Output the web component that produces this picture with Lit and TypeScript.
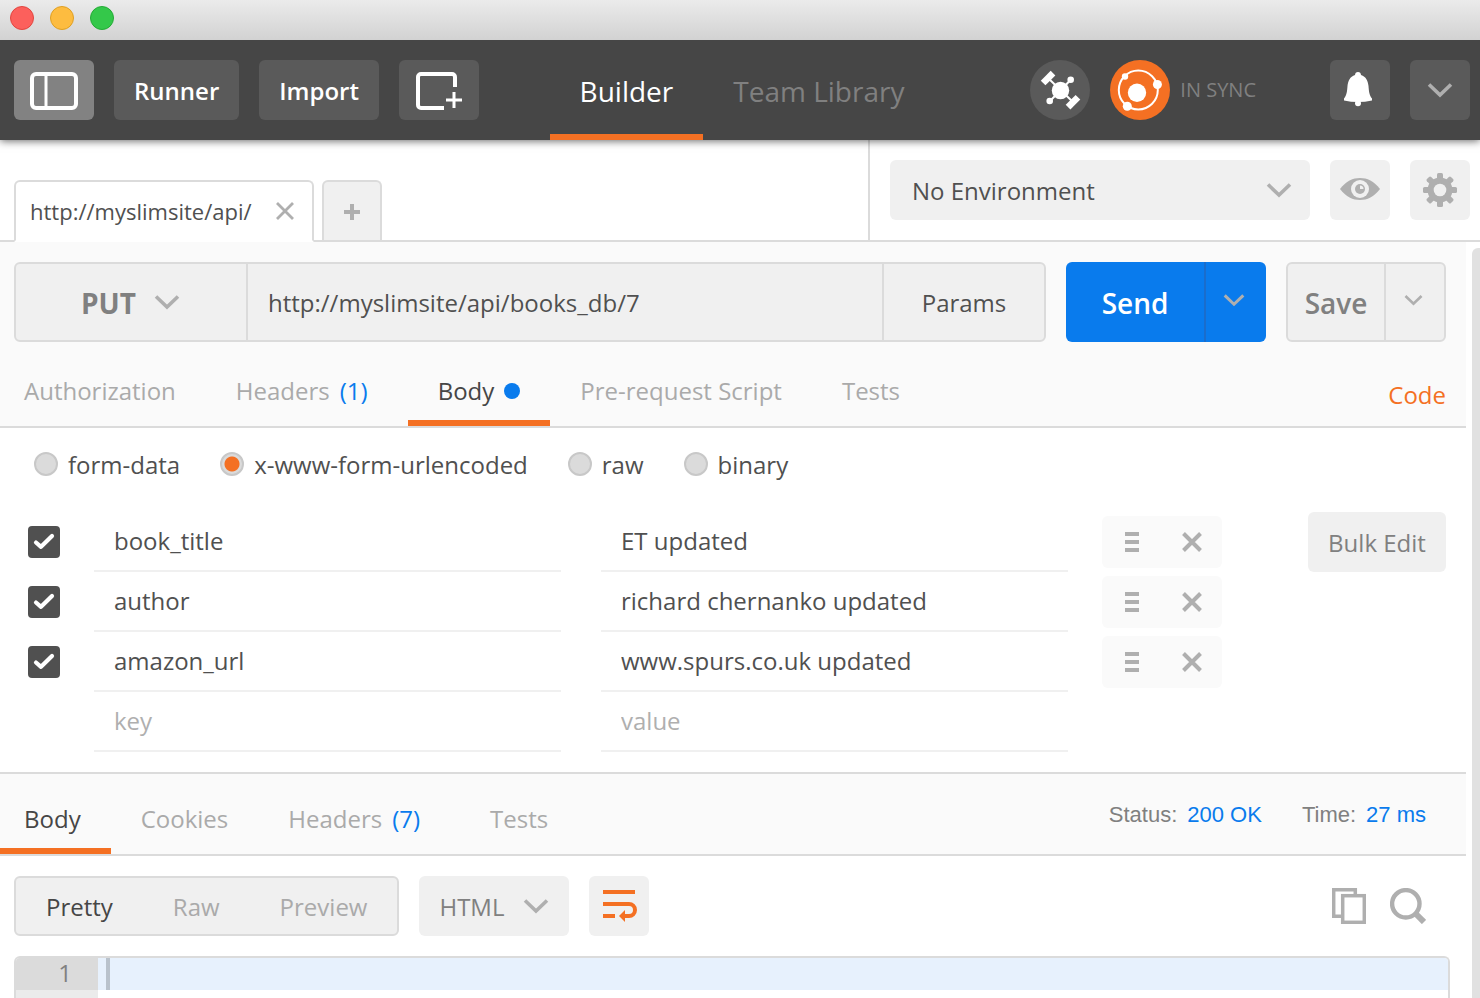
import { LitElement, html, css, svg, nothing } from "lit";
import { customElement, state } from "lit/decorators.js";
import { classMap } from "lit/directives/class-map.js";

interface Tab {
  label: string;
  count?: number;
  dot?: boolean;
}

interface Param {
  key: string;
  value: string;
}

const chevron = (w = 26, h = 16) => html`<svg class="chevron" width=${w} height=${h} viewBox="0 0 26 16" aria-hidden="true">
  <path d="M2 2.500L13 13L24 2.500" fill="none" stroke="currentColor" stroke-width="3.600"/>
</svg>`;

const gearTeeth = [0, 45, 90, 135].map(
  (a) => svg`<rect x="17" y="3" width="6" height="34" rx="1.500" transform="rotate(${a} 20 20)"/>`
);

@customElement("app-root")
export class AppRoot extends LitElement {
  @state() requestTab = "Body";
  @state() responseTab = "Body";
  @state() view = "Pretty";
  @state() mode = "x-www-form-urlencoded";

  private requestTabs: Tab[] = [
    { label: "Authorization" },
    { label: "Headers", count: 1 },
    { label: "Body", dot: true },
    { label: "Pre-request Script" },
    { label: "Tests" },
  ];
  private responseTabs: Tab[] = [
    { label: "Body" },
    { label: "Cookies" },
    { label: "Headers", count: 7 },
    { label: "Tests" },
  ];
  private modes = ["form-data", "x-www-form-urlencoded", "raw", "binary"];
  private params: Param[] = [
    { key: "book_title", value: "ET updated" },
    { key: "author", value: "richard chernanko updated" },
    { key: "amazon_url", value: "www.spurs.co.uk updated" },
  ];

  static styles = css`
    :host {
      display: flex;
      flex-direction: column;
      height: 100vh;
      overflow: hidden;
      background: #fff;
      color: #505050;
      font: 24px/32px "Open Sans", "Noto Sans", sans-serif;
    }
    *, *::before, *::after { box-sizing: border-box; }
    button, input, select {
      margin: 0; padding: 0; border: 0; background: none; color: inherit;
      font: inherit; border-radius: 0; appearance: none; outline: none; min-width: 0;
    }
    button { display: flex; align-items: center; justify-content: center; cursor: pointer; }
    svg { display: block; flex: none; }
    a { text-decoration: none; }

    .titlebar {
      display: flex; align-items: flex-start; gap: 16px; height: 40px; flex: none;
      padding: 6px 10px; background: linear-gradient(#ebebeb, #d2d2d2);
      position: relative; z-index: 1;
    }
    .light { width: 24px; height: 24px; border-radius: 50%; border: 1px solid; }
    .light.close { background: #fc605c; border-color: #e2463f; }
    .light.min { background: #fdbc40; border-color: #dfa023; }
    .light.max { background: #34c84a; border-color: #24ab35; }

    header {
      display: grid; grid-template-columns: 1fr auto 1fr; align-items: center;
      height: 100px; flex: none; padding: 0 10px 0 14px; background: #464646;
      box-shadow: 0 1px 8px rgba(0, 0, 0, 0.6); position: relative;
    }
    .tools, .account { display: flex; align-items: center; gap: 20px; }
    .account { justify-content: flex-end; }
    .dark {
      height: 60px; padding: 2px 20px 0; border-radius: 6px; background: #5a5a5a;
      color: #fff; font-weight: 600; font-size: 24px;
    }
    .dark.on { background: #828282; }
    .dark.icon { width: 80px; padding: 2px 0 0; }
    .dark.square { width: 60px; padding: 0; color: #afafaf; }
    .main-nav { display: flex; align-self: stretch; }
    .main-nav a {
      display: flex; align-items: center; padding: 10px 30px 2px; font-size: 28px;
      border-bottom: 6px solid transparent; color: #808080;
    }
    .main-nav a.active { color: #fff; border-color: #f47023; }
    .sync { display: flex; align-items: center; gap: 10px; margin-right: 54px; color: #808080; font-size: 20px; }
    .round { width: 60px; height: 60px; border-radius: 50%; background: #5a5a5a; }
    .round.orange { background: #f47023; }

    .tabbar { display: flex; height: 102px; flex: none; border-bottom: 2px solid #dbdbdb; }
    .open-tabs { display: flex; align-items: flex-end; gap: 8px; flex: 1; padding-left: 14px; }
    .open-tab {
      display: flex; align-items: center; justify-content: space-between; width: 300px; height: 62px;
      margin-bottom: -2px; padding: 0 17px 0 14px; border: 2px solid #dbdbdb; border-bottom-color: #fff;
      border-radius: 6px 6px 0 0; background: #fff; font-size: 22px;
    }
    .open-tab button, .add-tab { color: #afafaf; }
    .add-tab {
      width: 60px; height: 60px; padding-top: 2px; border: 2px solid #dbdbdb; border-bottom: 0;
      border-radius: 6px 6px 0 0; background: #f0f0f0;
    }
    .environment { display: flex; align-items: center; gap: 20px; padding: 0 10px 0 20px; border-left: 2px solid #dbdbdb; }
    .pick { display: grid; align-items: center; border-radius: 6px; background: #f0f0f0; color: #afafaf; }
    .pick select, .pick svg { grid-area: 1 / 1; }
    .pick svg { justify-self: end; pointer-events: none; }
    .pick select { width: 100%; height: 100%; padding-top: 2px; color: #505050; }
    .pick.env { width: 420px; height: 60px; padding-right: 18px; }
    .pick.env select { padding-left: 22px; }
    .light-button { width: 60px; height: 60px; border-radius: 6px; background: #f0f0f0; color: #afafaf; }

    .body { display: flex; flex: 1; min-height: 0; }
    .pane { display: flex; flex-direction: column; flex: 1; min-width: 0; }
    .scroll { width: 14px; padding: 6px 0 0 6px; }
    .thumb { height: 100%; border-radius: 6px 0 0 0; background: #e1e1e1; }

    .request { background: #fafafa; border-bottom: 2px solid #dbdbdb; }
    .url-row { display: flex; gap: 20px; padding: 20px 20px 0 14px; }
    .group { display: flex; height: 80px; border: 2px solid #dbdbdb; border-radius: 6px; background: #f0f0f0; }
    .group.url { flex: 1; }
    .group > * + * { border-left: 2px solid #dbdbdb; }
    .pick.method { width: 230px; padding-right: 66px; background: none; }
    .pick.method select { padding-left: 65px; color: #808080; font-size: 28px; font-weight: 700; }
    .url-input { flex: 1; padding: 2px 20px 0; }
    .params { width: 162px; padding-top: 2px; }
    .send { display: flex; height: 80px; border-radius: 6px; overflow: hidden; background: #097bed; }
    .send button { width: 62px; color: #afafaf; border-left: 2px solid #1a6dcc; }
    .send .primary, .save .primary { padding-top: 2px; font-size: 28px; font-weight: 600; }
    .send .primary { width: 138px; border: 0; color: #fff; }
    .save .primary { width: 96px; color: #808080; }
    .save .more { width: 60px; color: #afafaf; }
    .more { padding: 0 4px 4px 0; }

    .tabs { display: flex; align-items: stretch; }
    .tabs button { padding: 6px 30px 0; border-bottom: 6px solid transparent; color: #aaa; white-space: pre; }
    .tabs button:first-child { padding-left: 24px; }
    .tabs button.active { color: #464646; border-color: #f47023; }
    .count { margin: 0 10px; color: #097bed; }
    .dot { width: 16px; height: 16px; margin-left: 10px; border-radius: 50%; background: #097bed; }
    .request-tabs { display: flex; justify-content: space-between; height: 84px; padding-right: 20px; }
    .request-tabs .tabs button { padding-top: 20px; }
    .code { align-self: center; padding-top: 22px; color: #f47023; }

    .modes { display: flex; gap: 40px; padding: 20px 34px; }
    .modes label { display: flex; align-items: center; gap: 10px; height: 34px; }
    .modes input {
      width: 24px; height: 24px; border: 2px solid #c8c8c8; border-radius: 50%; background: #dbdbdb; margin-bottom: 2px;
    }
    .modes input:checked { background: radial-gradient(circle, #f47023 7px, #dbdbdb 8px); }

    .form { display: flex; align-items: flex-start; gap: 86px; padding: 10px 20px 20px 28px; }
    .rows { flex: 1; min-width: 0; }
    .row { display: grid; grid-template-columns: 32px 1fr 1fr 120px; height: 60px; }
    .check { display: grid; width: 32px; height: 32px; margin-top: 14px; }
    .check input, .check svg { grid-area: 1 / 1; }
    .check input { border-radius: 4px; background: #505050; }
    .check svg { z-index: 1; pointer-events: none; }
    .field { padding: 0 20px; border-bottom: 2px solid #f0f0f0; }
    .field.key { grid-column: 2; margin: 0 20px 0 34px; }
    .field.value { grid-column: 3; margin: 0 34px 0 20px; }
    .field::placeholder { color: #afafaf; opacity: 1; }
    .actions { display: flex; height: 52px; margin-top: 4px; border-radius: 6px; background: #fafafa; color: #afafaf; }
    .actions button { flex: 1; }
    .bulk { width: 138px; height: 60px; padding-top: 2px; border-radius: 6px; background: #f0f0f0; color: #808080; }

    .response-head {
      display: flex; justify-content: space-between; height: 84px; flex: none; padding-right: 40px;
      background: #fafafa; border-top: 2px solid #dbdbdb; border-bottom: 2px solid #dbdbdb;
    }
    .response-head .tabs button { padding-top: 16px; }
    .stats { display: flex; align-items: center; gap: 40px; padding-top: 2px; font: 22px/28px "Liberation Sans", Arial, sans-serif; color: #808080; }
    .stats b { margin-left: 10px; font-weight: 400; color: #097bed; }
    .viewer { display: flex; align-items: center; gap: 20px; padding: 20px 40px 20px 14px; flex: none; }
    .group.views { height: 60px; }
    .views button { padding: 2px 30px 0; border: 0; color: #aaa; }
    .views button.active { color: #464646; }
    .pick.lang { width: 150px; height: 60px; padding-right: 20px; }
    .pick.lang select { padding-left: 20px; color: #808080; }
    .utilities { display: flex; gap: 24px; margin-left: auto; color: #afafaf; }
    .editor {
      display: flex; flex: 1; min-height: 0; margin: 0 16px 0 14px; overflow: hidden;
      border: 2px solid #dbdbdb; border-bottom: 0; border-radius: 6px 6px 0 0;
    }
    .gutter { width: 82px; background: #ebebeb; color: #808080; text-align: right; }
    .line-number { height: 32px; line-height: 30px; padding-right: 26px; background: #dbdbdb; }
    .line { flex: 1; height: 32px; padding-left: 8px; background: #e7f1fd; }
    .caret { width: 4px; height: 32px; background: #b9c2cc; }
  `;

  private tabs(list: Tab[], current: string, pick: (label: string) => void) {
    return html`<nav class="tabs">
      ${list.map(
        (t) => html`<button class=${classMap({ active: t.label === current })} @click=${() => pick(t.label)}>${t.label}${t.count
            ? html`<span class="count">(${t.count})</span>`
            : nothing}${t.dot ? html`<span class="dot"></span>` : nothing}</button>`
      )}
    </nav>`;
  }

  private paramRow(p?: Param) {
    return html`<div class="row">
      ${p
        ? html`<label class="check">
            <input type="checkbox" checked aria-label="Enable ${p.key}" />
            <svg width="32" height="32" viewBox="0 0 32 32"><path d="M8 16.500L13 20.800L24 10" fill="none" stroke="#fff" stroke-width="4.200" stroke-linecap="round" stroke-linejoin="round"/></svg>
          </label>`
        : nothing}
      <input class="field key" aria-label="Key" placeholder="key" .value=${p?.key ?? ""} />
      <input class="field value" aria-label="Value" placeholder="value" .value=${p?.value ?? ""} />
      ${p
        ? html`<div class="actions">
            <button aria-label="Reorder"><svg width="14" height="20" viewBox="0 0 14 20" fill="currentColor"><path d="M0 0h14v4H0zM0 8h14v4H0zM0 16h14v4H0z"/></svg></button>
            <button aria-label="Remove"><svg width="20" height="20" viewBox="0 0 20 20"><path d="M1.500 1.500l17 17M18.500 1.500l-17 17" stroke="currentColor" stroke-width="4"/></svg></button>
          </div>`
        : nothing}
    </div>`;
  }

  render() {
    return html`
      <div class="titlebar">
        <span class="light close"></span><span class="light min"></span><span class="light max"></span>
      </div>
      <header>
        <div class="tools">
          <button class="dark icon on" aria-label="Toggle sidebar">
            <svg width="48" height="38" viewBox="0 0 48 38" fill="none" stroke="#fff"><rect x="2" y="2" width="44" height="34" rx="4" stroke-width="4"/><path d="M16 3v32" stroke-width="3"/></svg>
          </button>
          <button class="dark">Runner</button>
          <button class="dark">Import</button>
          <button class="dark icon" aria-label="New window">
            <svg width="48" height="40" viewBox="0 0 48 40" fill="none" stroke="#fff"><path d="M29 37H6a3 3 0 0 1-3-3V6a3 3 0 0 1 3-3h31a3 3 0 0 1 3 3v10" stroke-width="4"/><path d="M31 29h16M39 21v16" stroke-width="3"/></svg>
          </button>
        </div>
        <nav class="main-nav">
          <a href="#builder" class="active">Builder</a>
          <a href="#library">Team Library</a>
        </nav>
        <div class="account">
          <button class="round" aria-label="Interceptor">
            <svg width="60" height="60" viewBox="0 0 60 60" fill="#fff">
              <path d="M18 18L43 42M40.500 20L20 41" stroke="#fff" stroke-width="2"/>
              <circle cx="30.500" cy="30.500" r="8.700"/><circle cx="40.700" cy="19.800" r="3.300"/><circle cx="19.700" cy="41" r="3.300"/>
              <rect x="11" y="14.800" width="14" height="6.600" transform="rotate(-45 18 18)"/>
              <rect x="36" y="38.900" width="14" height="6.600" transform="rotate(-45 43 42.200)"/>
            </svg>
          </button>
          <div class="sync">
            <button class="round orange" aria-label="Sync">
              <svg width="60" height="60" viewBox="0 0 60 60" fill="#fff">
                <circle cx="28.300" cy="30" r="19.500" fill="none" stroke="#fff" stroke-width="2"/>
                <circle cx="27" cy="32.700" r="9.200"/><circle cx="15" cy="16.500" r="3.200"/><circle cx="47.400" cy="24.500" r="4.500"/><circle cx="17.300" cy="46.300" r="4.500"/>
              </svg>
            </button>
            <span>IN SYNC</span>
          </div>
          <button class="dark square" aria-label="Notifications">
            <svg width="60" height="60" viewBox="0 0 60 60" fill="#fff"><path d="M28 12a3.200 3.200 0 0 1 3 3c5 1.500 7 6 7.500 11c.4 5 .6 9 3.500 12.500v2q-7 1.500-14 1.500t-14-1.500v-2c2.900-3.500 3.100-7.500 3.500-12.500c.5-5 2.500-9.500 7.500-11a3.200 3.200 0 0 1 3-3z"/><circle cx="28" cy="43.300" r="3"/></svg>
          </button>
          <button class="dark square" aria-label="Menu">${chevron()}</button>
        </div>
      </header>

      <div class="tabbar">
        <div class="open-tabs">
          <div class="open-tab">
            <span>http://myslimsite/api/</span>
            <button aria-label="Close tab"><svg width="20" height="20" viewBox="0 0 20 20"><path d="M2 2l16 16M18 2L2 18" stroke="currentColor" stroke-width="2.800"/></svg></button>
          </div>
          <button class="add-tab" aria-label="New tab"><svg width="16" height="16" viewBox="0 0 16 16"><path d="M0 8h16M8 0v16" stroke="currentColor" stroke-width="4"/></svg></button>
        </div>
        <div class="environment">
          <label class="pick env">
            <select aria-label="Environment"><option>No Environment</option></select>
            ${chevron()}
          </label>
          <button class="light-button" aria-label="Quick look">
            <svg width="40" height="24" viewBox="0 0 40 24"><path d="M0 11C6 3 13 0 20 0s14 3 20 11c-6 8-13 11-20 11S6 19 0 11z" fill="currentColor"/><circle cx="20" cy="11" r="9" fill="#f0f0f0"/><circle cx="20" cy="11" r="5" fill="currentColor"/><path d="M20 11V7.500a3.500 3.500 0 0 1 3.500 3.500z" fill="#f0f0f0"/></svg>
          </button>
          <button class="light-button" aria-label="Settings">
            <svg width="40" height="40" viewBox="0 0 40 40" fill="currentColor">${gearTeeth}<circle cx="20" cy="20" r="12.500"/><circle cx="20" cy="20" r="6.300" fill="#f0f0f0"/></svg>
          </button>
        </div>
      </div>

      <div class="body">
        <main class="pane">
          <section class="request">
            <div class="url-row">
              <div class="group url">
                <label class="pick method"><select aria-label="Method"><option>PUT</option></select>${chevron()}</label>
                <input class="url-input" aria-label="Request URL" .value=${"http://myslimsite/api/books_db/7"} />
                <button class="params">Params</button>
              </div>
              <div class="send">
                <button class="primary">Send</button>
                <button class="more" aria-label="Send options">${chevron(22, 14)}</button>
              </div>
              <div class="group save">
                <button class="primary">Save</button>
                <button class="more" aria-label="Save options">${chevron(19, 12)}</button>
              </div>
            </div>
            <div class="request-tabs">
              ${this.tabs(this.requestTabs, this.requestTab, (l) => (this.requestTab = l))}
              <a class="code" href="#code">Code</a>
            </div>
          </section>

          <div class="modes">
            ${this.modes.map(
              (m) => html`<label><input type="radio" name="mode" .checked=${m === this.mode} @change=${() => (this.mode = m)} />${m}</label>`
            )}
          </div>
          <div class="form">
            <div class="rows">${this.params.map((p) => this.paramRow(p))}${this.paramRow()}</div>
            <button class="bulk">Bulk Edit</button>
          </div>

          <section class="response-head">
            ${this.tabs(this.responseTabs, this.responseTab, (l) => (this.responseTab = l))}
            <div class="stats"><span>Status:<b>200 OK</b></span><span>Time:<b>27 ms</b></span></div>
          </section>
          <div class="viewer">
            <div class="group views">
              ${["Pretty", "Raw", "Preview"].map(
                (v) => html`<button class=${classMap({ active: v === this.view })} @click=${() => (this.view = v)}>${v}</button>`
              )}
            </div>
            <label class="pick lang"><select aria-label="Language"><option>HTML</option></select>${chevron()}</label>
            <button class="light-button" aria-label="Wrap lines">
              <svg width="60" height="60" viewBox="0 0 60 60" fill="none" stroke="#f47023" stroke-width="4"><path d="M14 16h32M14 40h12M14 28h26a6 6 0 0 1 0 12h-6"/><path d="M30 40l6-6v12z" fill="#f47023" stroke="none"/></svg>
            </button>
            <div class="utilities">
              <button aria-label="Copy"><svg width="34" height="36" viewBox="0 0 34 36" fill="none" stroke="currentColor" stroke-width="3.500"><path d="M9 28.300H1.700V1.700h21.600V6"/><rect x="10.700" y="7.700" width="21.600" height="26.600"/></svg></button>
              <button aria-label="Search"><svg width="36" height="36" viewBox="0 0 36 36" fill="none" stroke="currentColor"><circle cx="15.800" cy="15.800" r="13.700" stroke-width="4.400"/><path d="M25.500 25.500L34 34" stroke-width="6"/></svg></button>
            </div>
          </div>
          <div class="editor">
            <div class="gutter"><div class="line-number">1</div></div>
            <div class="line"><div class="caret"></div></div>
          </div>
        </main>
        <div class="scroll"><div class="thumb"></div></div>
      </div>
    `;
  }
}
